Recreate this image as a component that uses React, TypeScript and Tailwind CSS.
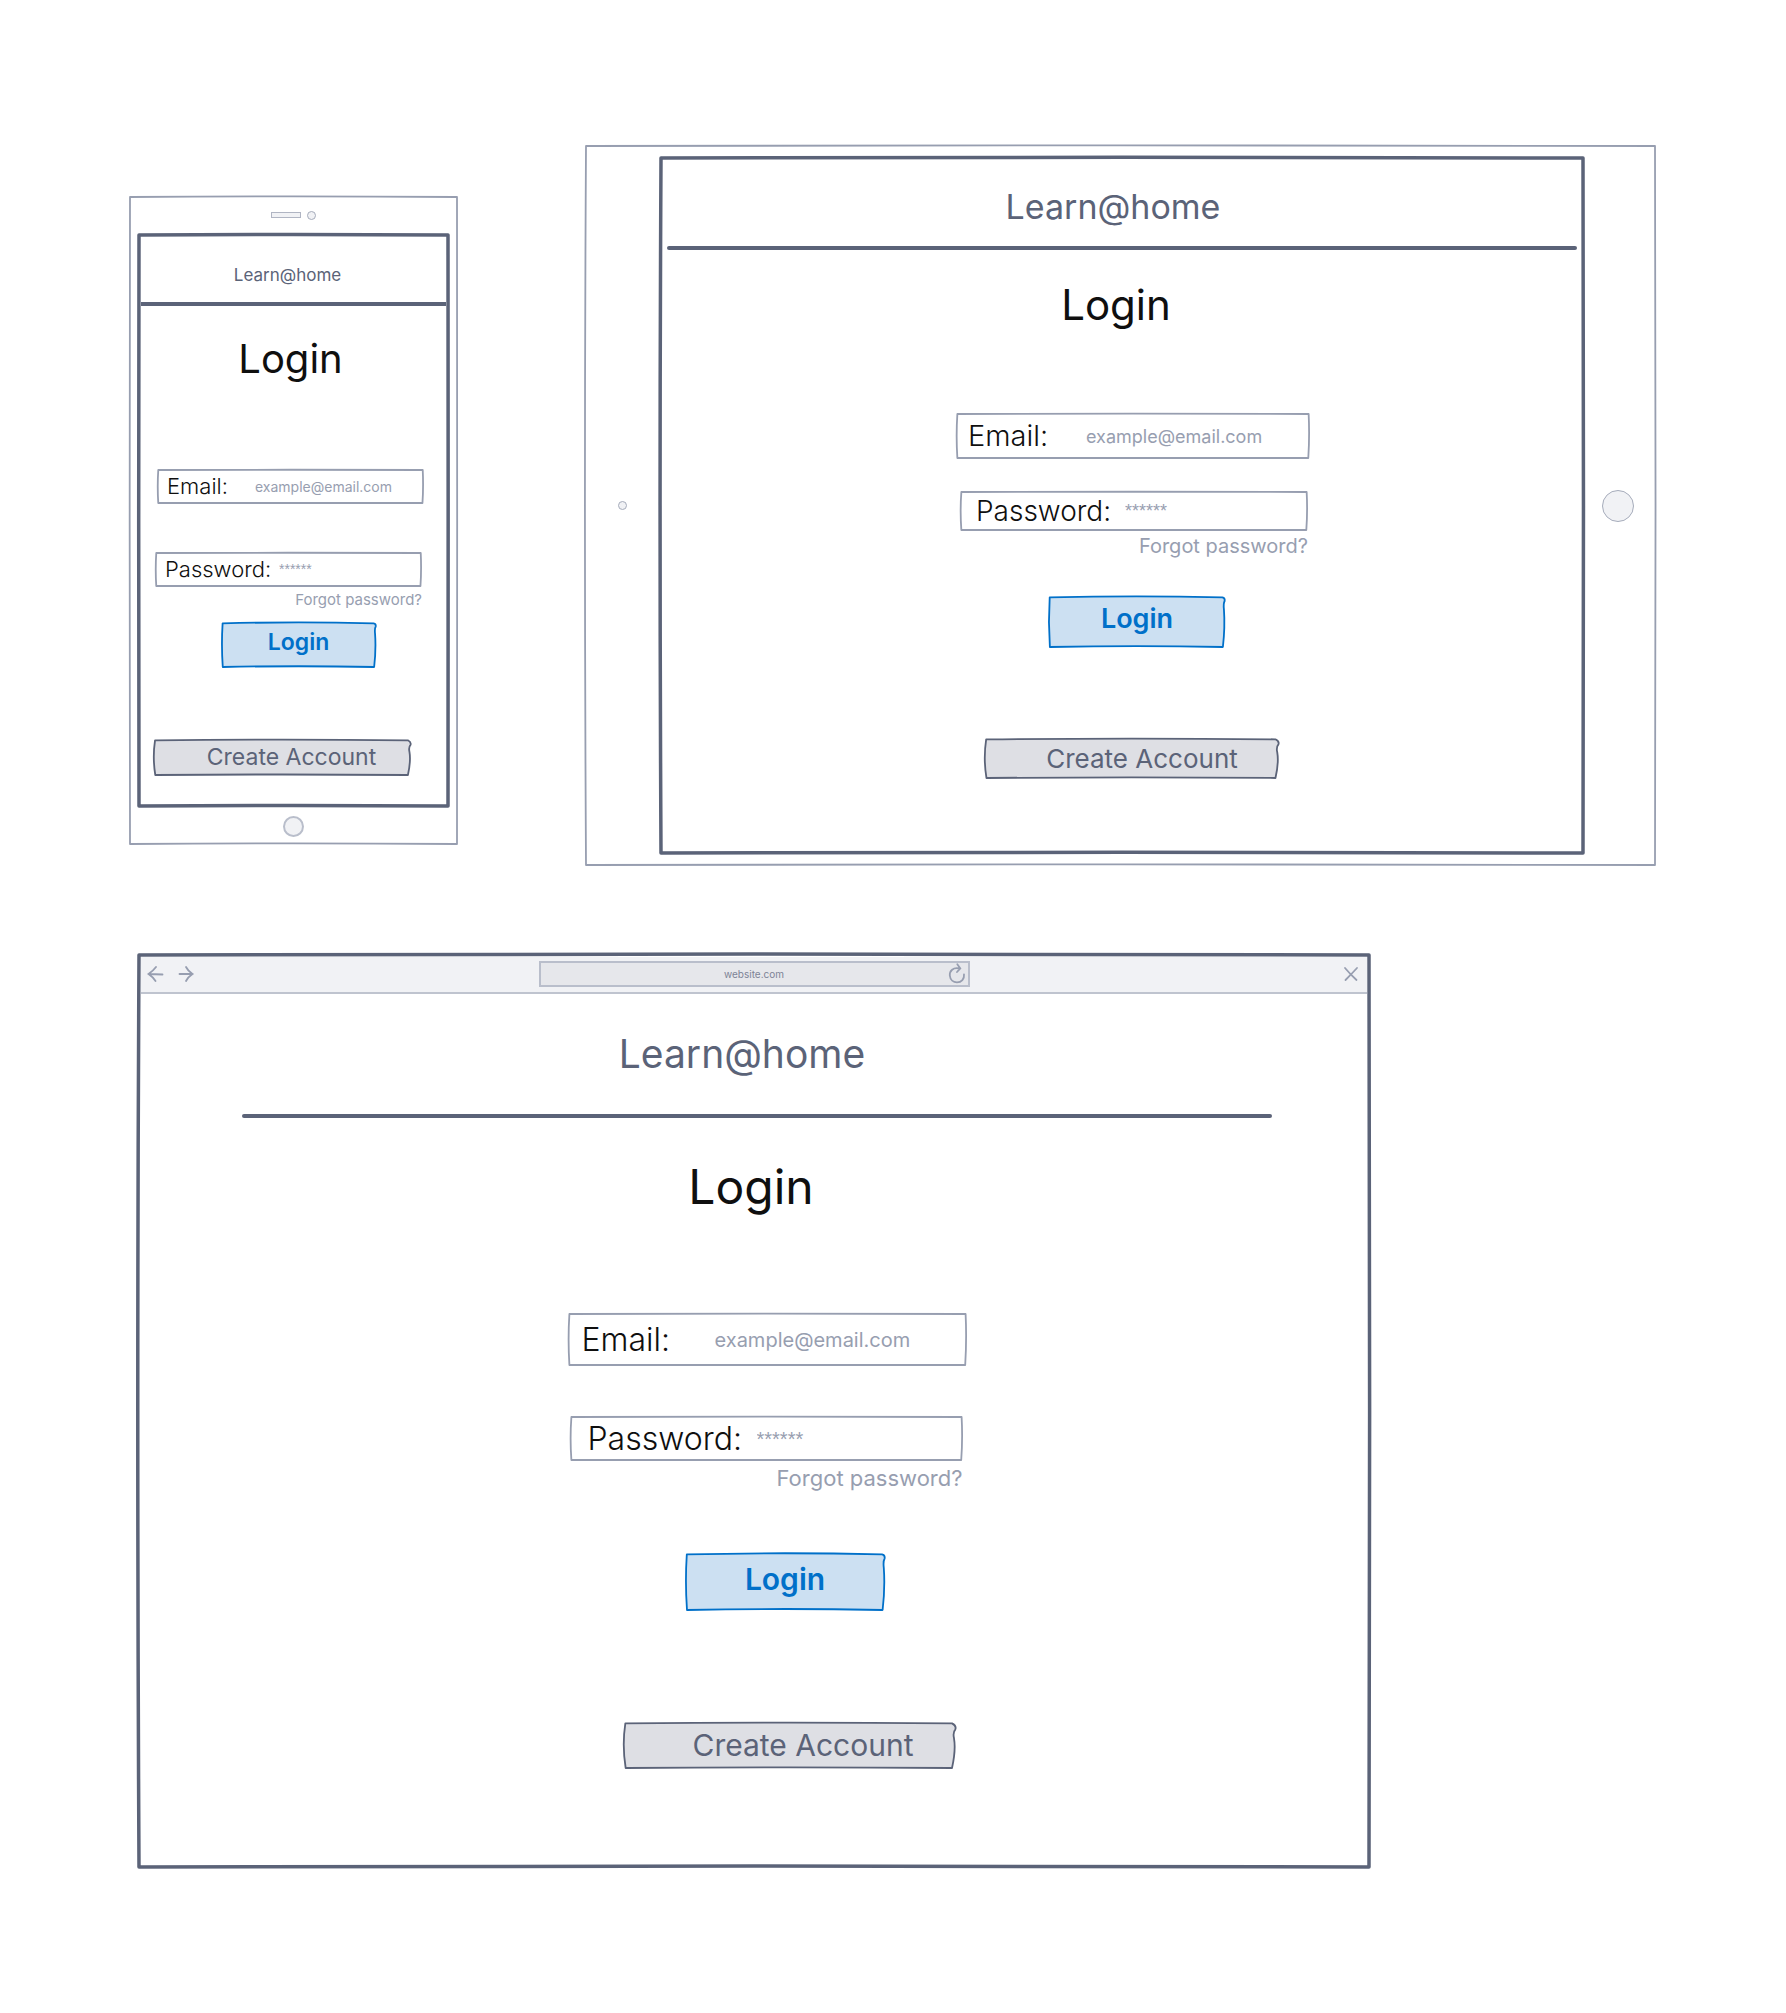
import { useId } from "react";
import type { ReactNode } from "react";

const FRAME = "M0 0 Q500 -2 1000 0 Q1001 500 1000 1000 Q500 998 0 1000 Q-2 500 0 0 Z";
const FIELD = "M1 0 Q500 -14 999 0 Q1002 500 998 1000 Q500 990 1 1000 Q-3 500 1 0 Z";
const LOGIN = "M4 8 Q500 -34 985 8 Q1001 20 998 80 Q990 130 994 250 Q1001 600 988 1000 Q500 965 5 1000 Q-5 500 4 8 Z";
const CREATE = "M4 8 Q500 -28 988 8 Q1002 60 998 140 Q990 210 994 340 Q1000 600 988 1000 Q500 970 5 1000 Q-6 500 4 8 Z";

function Outline({ d, className }: { d: string; className: string }) {
  return (
    <svg
      viewBox="0 0 1000 1000"
      preserveAspectRatio="none"
      aria-hidden="true"
      className={`pointer-events-none absolute inset-px h-[calc(100%-2px)] w-[calc(100%-2px)] overflow-visible ${className}`}
    >
      <path d={d} vectorEffect="non-scaling-stroke" strokeLinejoin="round" />
    </svg>
  );
}

type Look = {
  header: string;
  brand: string;
  rule: string;
  title: string;
  email: string;
  emailLabel: string;
  emailInput: string;
  password: string;
  passwordLabel: string;
  passwordInput: string;
  forgot: string;
  login: string;
  loginText: string;
  create: string;
  createText: string;
};

const phone: Look = {
  header: "pt-[26px]",
  brand: "mr-[12px] text-[17px] leading-6",
  rule: "mt-[15px] w-full",
  title: "mt-[29px] mr-[6px] text-[40px] leading-[48px]",
  email: "mt-[86px] mr-[6px] h-[35px] w-[267px]",
  emailLabel: "w-[98px] pl-[10px] text-[22px]",
  emailInput: "text-[14px]",
  password: "mt-[48px] h-[35px] w-[267px]",
  passwordLabel: "w-[124px] pl-[10px] text-[22px]",
  passwordInput: "text-[14px]",
  forgot: "mt-[3px] text-[15px] leading-5",
  login: "mt-[12px] ml-[10px] h-[46px] w-[156px]",
  loginText: "text-[23px]",
  create: "mt-[71px] mb-[28px] mr-[22px] h-[37px] w-[259px]",
  createText: "ml-[18px] text-[23px]",
};

const tablet: Look = {
  header: "pt-[27px]",
  brand: "mr-[18px] text-[34px] leading-10",
  rule: "mt-[19px] w-[calc(100%-8px)] rounded-full",
  title: "mt-[31px] mr-[12px] text-[42px] leading-[48px]",
  email: "mt-[84px] ml-[22px] h-[46px] w-[354px]",
  emailLabel: "w-[130px] pl-[12px] text-[29px]",
  emailInput: "text-[18px]",
  password: "mt-[32px] h-[40px] w-[348px]",
  passwordLabel: "w-[165px] pl-[16px] text-[28px]",
  passwordInput: "text-[18px]",
  forgot: "mt-[3px] text-[20px] leading-6",
  login: "mt-[38px] ml-[30px] h-[52px] w-[178px]",
  loginText: "text-[27px]",
  create: "mt-[90px] mb-[72px] ml-[20px] h-[41px] w-[296px]",
  createText: "ml-[20px] text-[26px]",
};

const desktop: Look = {
  header: "pt-[36px]",
  brand: "mr-[24px] text-[39px] leading-[48px]",
  rule: "mt-[36px] ml-[6px] w-[84%] rounded-full",
  title: "mt-[41px] mr-[6px] text-[48px] leading-[56px]",
  email: "mt-[98px] ml-[26px] h-[53px] w-[399px]",
  emailLabel: "w-[147px] pl-[14px] text-[32px]",
  emailInput: "text-[20px]",
  password: "mt-[50px] h-[45px] w-[393px]",
  passwordLabel: "w-[187px] pl-[18px] text-[32px]",
  passwordInput: "text-[20px]",
  forgot: "mt-[3px] text-[22px] leading-7",
  login: "mt-[61px] ml-[62px] h-[58px] w-[201px]",
  loginText: "text-[30px]",
  create: "mt-[111px] mb-[96px] ml-[72px] h-[47px] w-[334px]",
  createText: "ml-[26px] text-[30px]",
};

function LoginPage({ look, passwordSide }: { look: Look; passwordSide: string }) {
  const id = useId();
  return (
    <div className="flex flex-col items-center">
      <header className={`flex w-full flex-col items-center ${look.header}`}>
        <h1 className={`text-[#5b6378] ${look.brand}`}>Learn@home</h1>
        <div className={`h-[4px] bg-[#5b6378] ${look.rule}`} />
      </header>
      <h2 className={`text-[#0f0f0f] ${look.title}`}>Login</h2>
      <form className="flex w-full flex-col items-center" onSubmit={(e) => e.preventDefault()}>
        <div className={`relative flex max-w-full items-center ${look.email}`}>
          <Outline d={FIELD} className="fill-white stroke-[#979eb0] stroke-[1.8]" />
          <label htmlFor={`${id}-email`} className={`relative shrink-0 font-light text-[#0f0f0f] ${look.emailLabel}`}>
            Email:
          </label>
          <input
            id={`${id}-email`}
            type="email"
            placeholder="example@email.com"
            className={`relative min-w-0 flex-1 bg-transparent text-[#979eb0] outline-none placeholder:text-[#979eb0] ${look.emailInput}`}
          />
        </div>
        <div className={`flex flex-col items-end ${passwordSide}`}>
          <div className={`relative flex max-w-full items-center self-start ${look.password}`}>
            <Outline d={FIELD} className="fill-white stroke-[#979eb0] stroke-[1.8]" />
            <label
              htmlFor={`${id}-password`}
              className={`relative shrink-0 font-light text-[#0f0f0f] ${look.passwordLabel}`}
            >
              Password:
            </label>
            <input
              id={`${id}-password`}
              type="password"
              placeholder="******"
              className={`relative min-w-0 flex-1 bg-transparent font-['Liberation_Sans',sans-serif] text-[#979eb0] outline-none placeholder:text-[#979eb0] ${look.passwordInput}`}
            />
          </div>
          <a href="#forgot" className={`text-[#979eb0] ${look.forgot}`}>
            Forgot password?
          </a>
        </div>
        <button type="submit" className={`relative flex items-center justify-center ${look.login}`}>
          <Outline d={LOGIN} className="fill-[#cce0f2] stroke-[#0070c9] stroke-[1.8]" />
          <span className={`relative mb-1.5 font-semibold text-[#0070c9] ${look.loginText}`}>Login</span>
        </button>
        <button type="button" className={`relative flex items-center justify-center ${look.create}`}>
          <Outline d={CREATE} className="fill-[#dedfe4] stroke-[#5b6378] stroke-[1.8]" />
          <span className={`relative text-[#5b6378] ${look.createText}`}>Create Account</span>
        </button>
      </form>
    </div>
  );
}

function Screen({ className, children }: { className: string; children: ReactNode }) {
  return (
    <div className={`relative p-[3px] ${className}`}>
      <div>{children}</div>
      <Outline d={FRAME} className="fill-none stroke-[#5b6378] stroke-[3.5]" />
    </div>
  );
}

function BrowserBar() {
  return (
    <div className="grid h-[37px] grid-cols-[1fr_431px_1fr] items-center border-b-2 border-[#bfc4cf] bg-[#f1f2f5] pb-px text-[#979eb0]">
      <div className="flex items-center gap-3 pl-1.5">
        <button type="button" aria-label="Back">
          <svg viewBox="0 0 18 18" className="size-[18px] fill-none stroke-current stroke-[1.8]" strokeLinecap="round">
            <path d="M9 2 Q6 6 1.500 9 Q6 12 8.500 16 M1.500 9 L15.500 9.500" />
          </svg>
        </button>
        <button type="button" aria-label="Forward">
          <svg viewBox="0 0 18 18" className="size-[18px] fill-none stroke-current stroke-[1.8]" strokeLinecap="round">
            <path d="M9 2 Q11 6 15.500 9 Q11 12 9 16 M15.500 9 L2.500 9" />
          </svg>
        </button>
      </div>
      <div className="flex h-[26px] items-center border-2 border-[#b9becb] bg-[#e6e7eb]">
        <input
          aria-label="Address"
          defaultValue="website.com"
          className="min-w-0 flex-1 bg-transparent pl-5 text-center text-[10px] text-[#7d8396] outline-none"
        />
        <button type="button" aria-label="Reload" className="mr-0.5">
          <svg viewBox="0 0 18 22" className="h-[22px] w-[18px] fill-none stroke-current stroke-[1.8]" strokeLinecap="round">
            <path d="M11.500 5.500 C5 4 1.500 8 1.800 12.500 C2.200 17 5.500 19.300 9 19.300 C13.500 19.300 16.500 16 16 11.500 M9.300 1.300 L12.300 5.400 L9 9" />
          </svg>
        </button>
      </div>
      <button type="button" aria-label="Close" className="mr-2 justify-self-end">
        <svg viewBox="0 0 16 16" className="size-4 fill-none stroke-current stroke-[1.8]" strokeLinecap="round">
          <path d="M2 2 Q7 8 13.500 14 M14 2 Q8.500 8 2.500 14" />
        </svg>
      </button>
    </div>
  );
}

export default function App() {
  return (
    <main className="min-h-screen bg-white px-[129px] pt-[145px] pb-[146px] font-['Inter',sans-serif]">
      <div className="flex items-start gap-[127px]">
        <section aria-label="Phone" className="relative mt-[51px] w-[329px] shrink-0 px-[9px]">
          <Outline d={FRAME} className="fill-none stroke-[#979eb0] stroke-[1.8]" />
          <div className="flex h-[38px] items-center justify-center gap-1.5">
            <div className="h-[6px] w-[30px] border border-[#b0b5c3] bg-[#f1f2f5]" />
            <div className="size-[9px] rounded-full border border-[#a6acbb] bg-[#f1f2f5]" />
          </div>
          <Screen className="">
            <LoginPage look={phone} passwordSide="mr-[10px]" />
          </Screen>
          <div className="flex h-[38px] items-center justify-center">
            <div className="size-[21px] rounded-full border-2 border-[#b9becb] bg-[#f1f2f5]" />
          </div>
        </section>

        <section aria-label="Tablet" className="relative mr-px flex min-w-0 flex-1 items-center pt-[12px] pb-[12px]">
          <Outline d={FRAME} className="fill-none stroke-[#979eb0] stroke-[1.8]" />
          <div className="flex w-[75px] shrink-0 justify-center">
            <div className="size-[9px] rounded-full border border-[#a6acbb] bg-[#f1f2f5]" />
          </div>
          <Screen className="min-w-0 flex-1">
            <LoginPage look={tablet} passwordSide="ml-[24px]" />
          </Screen>
          <div className="flex w-[72px] shrink-0 justify-center">
            <div className="mr-1 size-8 rounded-full border border-[#a6acbb] bg-[#f1f2f5]" />
          </div>
        </section>
      </div>

      <section aria-label="Desktop" className="mt-[88px] ml-[9px] max-w-[1232px]">
        <Screen className="">
          <BrowserBar />
          <LoginPage look={desktop} passwordSide="ml-[24px]" />
        </Screen>
      </section>
    </main>
  );
}
